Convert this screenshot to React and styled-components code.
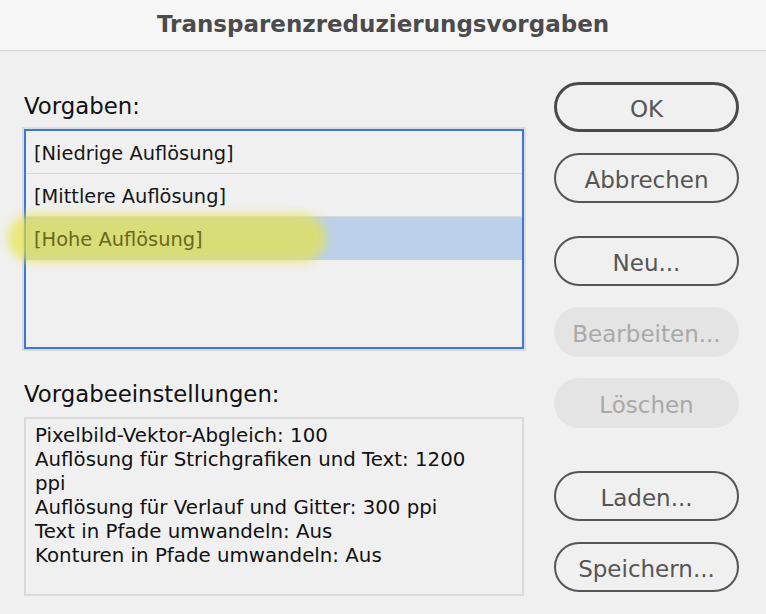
import React from 'react'
import styled, { createGlobalStyle } from 'styled-components'

const presets = ['[Niedrige Auflösung]', '[Mittlere Auflösung]', '[Hohe Auflösung]']

const settings = [
  'Pixelbild-Vektor-Abgleich: 100',
  'Auflösung für Strichgrafiken und Text: 1200',
  'ppi',
  'Auflösung für Verlauf und Gitter: 300 ppi',
  'Text in Pfade umwandeln: Aus',
  'Konturen in Pfade umwandeln: Aus',
]

const buttons = [
  { label: 'OK', primary: true },
  { label: 'Abbrechen' },
  { label: 'Neu...', extra: 12 },
  { label: 'Bearbeiten...', disabled: true },
  { label: 'Löschen', disabled: true },
  { label: 'Laden...', extra: 22 },
  { label: 'Speichern...' },
]

const App = () => {
  return (
    <>
      <GlobalStyle />
      <Dialog>
        <TitleBar>
          <h1>Transparenzreduzierungsvorgaben</h1>
        </TitleBar>
        <Body>
          <LeftColumn>
            <Label>Vorgaben:</Label>
            <PresetList>
              {presets.map((p, i) => (
                <Row key={p} $selected={i === 2}>
                  {i === 2 && <Marker />}
                  <span>{p}</span>
                </Row>
              ))}
            </PresetList>
            <Label $top={32}>Vorgabeeinstellungen:</Label>
            <SettingsBox>
              {settings.map((line) => (
                <div key={line}>{line}</div>
              ))}
            </SettingsBox>
          </LeftColumn>
          <ButtonColumn>
            {buttons.map((b) => (
              <Button
                key={b.label}
                $primary={b.primary}
                $extra={b.extra}
                disabled={b.disabled}
              >
                {b.label}
              </Button>
            ))}
          </ButtonColumn>
        </Body>
      </Dialog>
    </>
  )
}

export default App

const GlobalStyle = createGlobalStyle`
  html, body {
    margin: 0;
    padding: 0;
    background: #f0f0f0;
  }
  body {
    font-family: "DejaVu Sans", "Noto Sans", sans-serif;
  }
`

const Dialog = styled.div`
  width: 766px;
  height: 614px;
  background: #f0f0f0;
  display: flex;
  flex-direction: column;
  overflow: hidden;
`

const TitleBar = styled.div`
  height: 51px;
  box-sizing: border-box;
  padding-bottom: 2px;
  background: #f6f6f6;
  border-bottom: 1px solid #d4d4d4;
  display: flex;
  align-items: center;
  justify-content: center;

  h1 {
    margin: 0;
    font-size: 23px;
    font-weight: 700;
    color: #4b4b4b;
  }
`

const Body = styled.div`
  display: flex;
  padding: 0 27px 0 24px;
  gap: 30px;
`

const LeftColumn = styled.div`
  width: 500px;
  display: flex;
  flex-direction: column;
`

const Label = styled.div`
  margin-top: ${(p) => p.$top ?? 42}px;
  margin-bottom: 10px;
  font-size: 22.8px;
  line-height: 26px;
  color: #111;
`

const PresetList = styled.div`
  position: relative;
  height: 220px;
  box-sizing: border-box;
  border: 2px solid #3a78de;
  box-shadow: 0 0 0 2px #dcdcdc;
  background: #f0f0f0;
`

const Row = styled.div`
  position: relative;
  height: 43px;
  display: flex;
  align-items: center;
  padding: 2px 0 0 8px;
  box-sizing: border-box;
  font-size: 19.4px;
  color: ${(p) => (p.$selected ? '#6b681d' : '#161616')};
  background: ${(p) => (p.$selected ? '#bcd0ea' : 'transparent')};
  border-bottom: 1px solid ${(p) => (p.$selected ? 'transparent' : '#d9d9d9')};

  span {
    position: relative;
    z-index: 2;
  }
`

const Marker = styled.i`
  position: absolute;
  left: -18px;
  top: -3px;
  width: 318px;
  height: 48px;
  border-radius: 24px;
  background: rgba(232, 228, 60, 0.66);
  filter: blur(5px);
  z-index: 1;
`

const SettingsBox = styled.div`
  height: 179px;
  box-sizing: border-box;
  border: 2px solid #d9d9d9;
  padding: 5px 9px;
  font-size: 19.8px;
  line-height: 24px;
  color: #111;
`

const ButtonColumn = styled.div`
  width: 185px;
  display: flex;
  flex-direction: column;
  gap: 21px;
  padding-top: 31px;
`

const Button = styled.button`
  height: 50px;
  margin-top: ${(p) => p.$extra || 0}px;
  box-sizing: border-box;
  border-radius: 25px;
  border: ${(p) =>
    p.disabled ? 'none' : p.$primary ? '3px solid #4a4a4a' : '2px solid #555'};
  background: ${(p) => (p.disabled ? '#e4e4e4' : '#f0f0f0')};
  color: ${(p) => (p.disabled ? '#a9a9a9' : '#555')};
  font-family: "DejaVu Sans", sans-serif;
  font-size: 23px;
  padding: 4px 0 0;
`
